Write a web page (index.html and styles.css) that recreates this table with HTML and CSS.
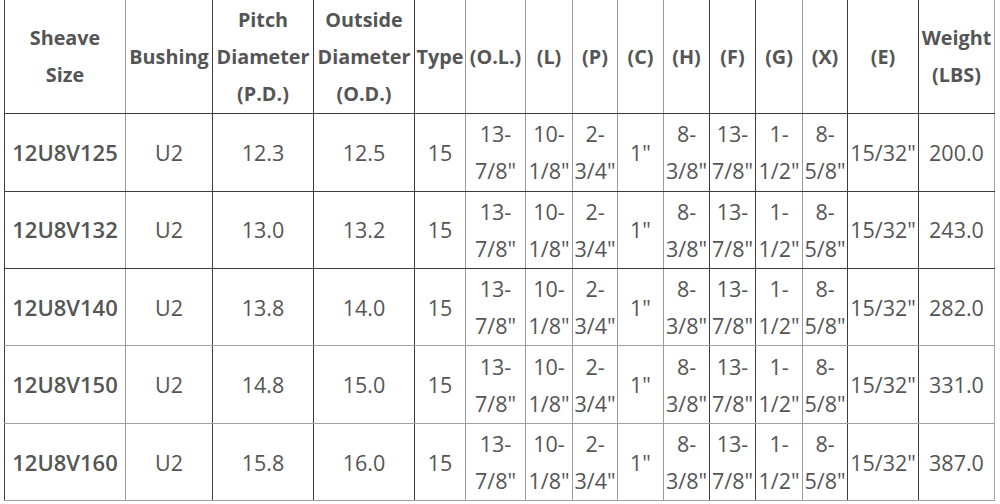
FILE: index.html
```html
<!DOCTYPE html>
<html>
<head>
<meta charset="utf-8">
<link rel="stylesheet" href="styles.css">
</head>
<body>
<table class="spec">
  <colgroup>
    <col class="w1 dk">
    <col class="w2 lt">
    <col class="w3 dk">
    <col class="w4 dk">
    <col class="w5 dk">
    <col class="w6 lt">
    <col class="w7 lt">
    <col class="w8 lt">
    <col class="w9 lt">
    <col class="w10 lt">
    <col class="w11 dk">
    <col class="w12 dk">
    <col class="w13 lt">
    <col class="w14 dk">
    <col class="w15 dk last">
  </colgroup>
  <thead>
    <tr>
      <th>Sheave<br>Size</th>
      <th>Bushing</th>
      <th>Pitch<br>Diameter<br>(P.D.)</th>
      <th>Outside<br>Diameter<br>(O.D.)</th>
      <th>Type</th>
      <th>(O.L.)</th>
      <th>(L)</th>
      <th>(P)</th>
      <th>(C)</th>
      <th>(H)</th>
      <th>(F)</th>
      <th>(G)</th>
      <th>(X)</th>
      <th>(E)</th>
      <th>Weight<br>(LBS)</th>
    </tr>
  </thead>
  <tbody>
    <tr class="dk">
      <td class="name">12U8V125</td><td>U2</td><td>12.3</td><td>12.5</td><td>15</td>
      <td>13-<br>7/8"</td><td>10-<br>1/8"</td><td>2-<br>3/4"</td><td>1"</td><td>8-<br>3/8"</td>
      <td>13-<br>7/8"</td><td>1-<br>1/2"</td><td>8-<br>5/8"</td><td>15/32"</td><td>200.0</td>
    </tr>
    <tr class="dk">
      <td class="name">12U8V132</td><td>U2</td><td>13.0</td><td>13.2</td><td>15</td>
      <td>13-<br>7/8"</td><td>10-<br>1/8"</td><td>2-<br>3/4"</td><td>1"</td><td>8-<br>3/8"</td>
      <td>13-<br>7/8"</td><td>1-<br>1/2"</td><td>8-<br>5/8"</td><td>15/32"</td><td>243.0</td>
    </tr>
    <tr class="lt">
      <td class="name">12U8V140</td><td>U2</td><td>13.8</td><td>14.0</td><td>15</td>
      <td>13-<br>7/8"</td><td>10-<br>1/8"</td><td>2-<br>3/4"</td><td>1"</td><td>8-<br>3/8"</td>
      <td>13-<br>7/8"</td><td>1-<br>1/2"</td><td>8-<br>5/8"</td><td>15/32"</td><td>282.0</td>
    </tr>
    <tr class="lt">
      <td class="name">12U8V150</td><td>U2</td><td>14.8</td><td>15.0</td><td>15</td>
      <td>13-<br>7/8"</td><td>10-<br>1/8"</td><td>2-<br>3/4"</td><td>1"</td><td>8-<br>3/8"</td>
      <td>13-<br>7/8"</td><td>1-<br>1/2"</td><td>8-<br>5/8"</td><td>15/32"</td><td>331.0</td>
    </tr>
    <tr class="lt">
      <td class="name">12U8V160</td><td>U2</td><td>15.8</td><td>16.0</td><td>15</td>
      <td>13-<br>7/8"</td><td>10-<br>1/8"</td><td>2-<br>3/4"</td><td>1"</td><td>8-<br>3/8"</td>
      <td>13-<br>7/8"</td><td>1-<br>1/2"</td><td>8-<br>5/8"</td><td>15/32"</td><td>387.0</td>
    </tr>
  </tbody>
</table>
</body>
</html>
```
FILE: styles.css
```css
html, body {
  margin: 0;
  padding: 0;
  background: #ffffff;
}
body {
  font-family: "Open Sans", "Noto Sans", sans-serif;
  color: #555555;
  overflow: hidden;
}
.spec {
  border-collapse: collapse;
  table-layout: fixed;
  width: 991px;
  margin: -1px 0 0 4px;
}
.spec col.dk { border-left: 1px solid #3c3c3c; }
.spec col.lt { border-left: 1px solid #9a9a9a; }
.spec col.last { border-right: 1px solid #a8a8a8; }
.spec col.w1 { width: 121px; }
.spec col.w2 { width: 87px; }
.spec col.w3 { width: 101px; }
.spec col.w4 { width: 101px; }
.spec col.w5 { width: 51px; }
.spec col.w6 { width: 60px; }
.spec col.w7 { width: 47px; }
.spec col.w8 { width: 45px; }
.spec col.w9 { width: 46px; }
.spec col.w10 { width: 46px; }
.spec col.w11 { width: 46px; }
.spec col.w12 { width: 47px; }
.spec col.w13 { width: 45px; }
.spec col.w14 { width: 71px; }
.spec col.w15 { width: 76px; }
.spec th,
.spec td {
  padding: 1px 0;
  text-align: center;
  vertical-align: middle;
  white-space: nowrap;
  overflow: visible;
}
.spec th {
  font-size: 19.8px;
  font-weight: 700;
  line-height: 37px;
  height: 112.3px;
  border-bottom: 1px solid #3c3c3c;
}
.spec td {
  font-size: 21.5px;
  font-weight: 400;
  line-height: 37px;
  height: 74.4px;
}
.spec tr.dk td { border-bottom: 1px solid #3c3c3c; }
.spec tr.lt td { border-bottom: 1px solid #a0a0a0; }
.spec td.name { font-size: 22px; font-weight: 600; }
```
